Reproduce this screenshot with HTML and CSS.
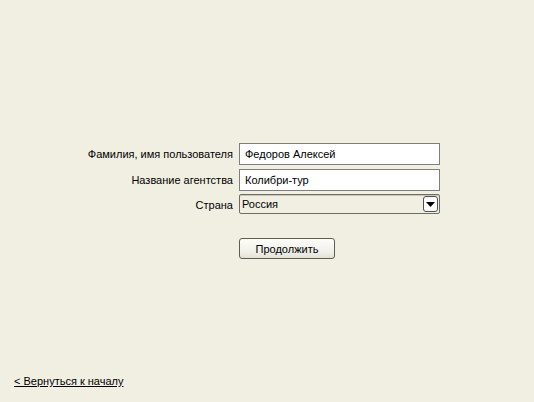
FILE: index.html
```html
<!DOCTYPE html>
<html lang="ru">
<head>
<meta charset="utf-8">
<title>Вход</title>
<link rel="stylesheet" href="styles.css">
</head>
<body>
<div class="page">
  <form class="form">
    <label class="label" for="user">Фамилия, имя пользователя</label>
    <input class="field" id="user" type="text" value="Федоров Алексей">
    <label class="label" for="agency">Название агентства</label>
    <input class="field" id="agency" type="text" value="Колибри-тур">
    <label class="label" for="country">Страна</label>
    <div class="select" id="country">
      <span class="select-value">Россия</span>
      <span class="select-btn"><svg width="9" height="5" viewBox="0 0 9 5"><path d="M0 0H9L4.5 5Z" fill="#000"/></svg></span>
    </div>
    <span></span>
    <div class="actions"><button class="btn" type="button">Продолжить</button></div>
  </form>
  <a class="back" href="#">&lt; Вернуться к началу</a>
</div>
</body>
</html>
```

FILE: styles.css
```css
html, body {
  margin: 0;
  padding: 0;
  background: #f1efe2;
}
body {
  font-family: "Liberation Sans", Arial, sans-serif;
  font-size: 11px;
  color: #000;
}
.page {
  height: 402px;
  box-sizing: border-box;
  display: flex;
  flex-direction: column;
  padding-top: 143px;
  padding-bottom: 15px;
}
.form {
  display: grid;
  grid-template-columns: 233px 200px;
  column-gap: 6px;
  row-gap: 4px;
  align-items: center;
}
.label {
  text-align: right;
}
.field {
  box-sizing: border-box;
  height: 22px;
  width: 201px;
  margin: 0;
  border: 1px solid #7f7f7f;
  background: #fff;
  padding: 0 0 0 5px;
  font: inherit;
  font-size: 11px;
  color: #000;
  outline: none;
}
.select {
  box-sizing: border-box;
  height: 20px;
  width: 201px;
  margin-top: -1px;
  border: 1px solid #6f6e66;
  border-radius: 2px;
  box-shadow: inset 0 1px 0 #c9c7bb;
  background: #f1efe2;
  display: flex;
  align-items: center;
  justify-content: space-between;
  padding: 0 1px 0 2px;
}
.select-btn {
  box-sizing: border-box;
  width: 15px;
  height: 16px;
  border: 1px solid #4f4f4f;
  border-radius: 3px;
  background: #fff;
  display: flex;
  align-items: center;
  justify-content: center;
}
.actions {
  padding-top: 20px;
}
.btn {
  box-sizing: border-box;
  width: 96px;
  height: 21px;
  margin: 0;
  border: 1px solid #5f5d52;
  border-radius: 3px;
  background: linear-gradient(#fdfdfb, #f0efe8 70%, #e3e1d6);
  font: inherit;
  font-size: 11px;
  color: #000;
  padding: 0;
}
.back {
  margin-top: auto;
  margin-left: 14px;
  align-self: flex-start;
  color: #000;
  text-decoration: underline;
}
```
